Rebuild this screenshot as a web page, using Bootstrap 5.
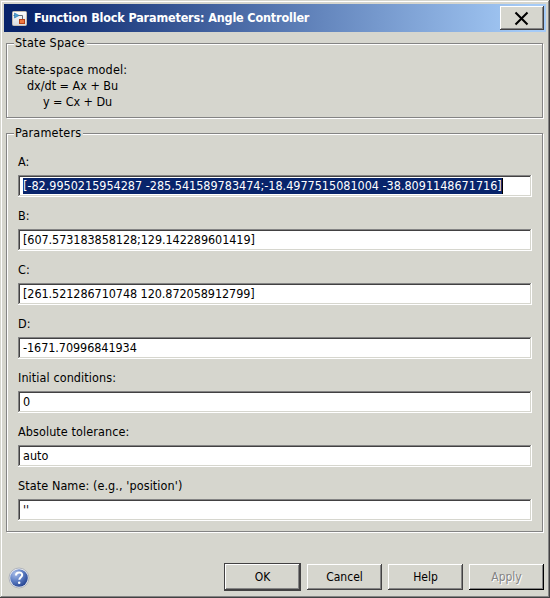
<!DOCTYPE html>
<html lang="en">
<head>
<meta charset="utf-8">
<title>Function Block Parameters: Angle Controller</title>
<link href="https://cdn.jsdelivr.net/npm/bootstrap@5.3.0/dist/css/bootstrap.min.css" rel="stylesheet">
<style>
:root{--face:#d6d6ce;--shade:#848484;--dark:#424142}
body{font:12.5px/16px "DejaVu Sans Condensed","DejaVu Sans",sans-serif;font-stretch:condensed;color:#000;background:var(--face);overflow:hidden}
.dlg{width:550px;height:598px;padding:4px;background:var(--face);box-shadow:inset -1px -1px var(--dark),inset 1px 1px var(--face),inset -2px -2px var(--shade),inset 2px 2px #fff}
.titlebar{height:28px;padding:2px 2px 2px 8px;background:linear-gradient(90deg,#08246b 4%,#a5cbf7 97%);color:#fff}
.caption-text{font-weight:700;margin-left:7px;letter-spacing:-.16px;white-space:nowrap}
.raised{background:var(--face);border:0;border-radius:0;padding:0;color:#000;box-shadow:inset -1px -1px var(--dark),inset 1px 1px #fff,inset -2px -2px var(--shade)}
.closer{width:44px;height:24px}
.frame{position:relative;margin-left:2px;width:537px;border:1px solid var(--shade);box-shadow:inset 1px 1px #fff,1px 1px #fff}
.frame-title{position:absolute;top:-9px;left:7px;padding:0 2px 0 1px;letter-spacing:.2px;background:var(--face)}
.space-frame{margin-top:11px;height:75px;padding:18px 8px 0}
.param-frame{margin-top:15px;height:399px;padding:20px 11px 0}
.model{letter-spacing:.17px}
.eq-state{padding-left:12px;letter-spacing:-.02px}
.eq-out{padding-left:28px;letter-spacing:-.1px}
.lab{height:16px;margin-bottom:5px;letter-spacing:.09px;white-space:nowrap}
.field{width:514px;height:22px;margin-bottom:11px;padding:3px 0 0 5px;background:#fff;white-space:nowrap;box-shadow:inset -1px -1px #fff,inset 1px 1px var(--shade),inset -2px -2px var(--face),inset 2px 2px var(--dark)}
.picked{display:inline-block;height:16px;background:#08246b;color:#fff;border-right:1px solid #000;letter-spacing:-.01px}
.num{letter-spacing:-.07px}
.footer-row{height:28px;margin:31px 2px 0 4px}
.help-icon{margin-top:2px}
.cmd{width:75px;height:26px;margin-left:6px;font-size:12px;line-height:26px;text-align:center}
.cmd-main{width:77px;height:28px;line-height:28px;box-shadow:inset 0 0 0 1px var(--dark),inset -2px -2px var(--dark),inset 2px 2px #fff,inset -3px -3px var(--shade)}
.cmd-off{color:#848484;text-shadow:1px 1px #fff;box-shadow:inset -1px -1px #000,inset 1px 1px #fff,inset -2px -2px var(--shade)}
</style>
<script src="https://cdn.jsdelivr.net/npm/bootstrap@5.3.0/dist/js/bootstrap.bundle.min.js"></script>
</head>
<body>
<main class="dlg">
<header class="titlebar d-flex align-items-center">
<svg width="15" height="15" viewBox="0 0 15 15"><defs><linearGradient id="p" x2="0" y2="1"><stop stop-color="#fff"/><stop offset="1" stop-color="#d7dce2"/></linearGradient></defs><rect x=".5" y=".5" width="14" height="14" rx="1" fill="url(#p)" stroke="#c5bcb0"/><path d="M1.5 4.5h9v4" fill="none" stroke="#666b78"/><path d="M2.5 2v5l4.5-2.5z" fill="#4b9fd2" stroke="#2b73ad" stroke-width=".6"/><rect x="7.5" y="8.5" width="5" height="4" fill="#ef7840" stroke="#b94319"/></svg>
<span class="caption-text">Function Block Parameters: Angle Controller</span>
<button class="raised closer ms-auto d-flex justify-content-center" aria-label="Close"><svg width="44" height="24" viewBox="0 0 44 24"><path d="M15.5 6.5l12 12m0-12l-12 12" stroke="#000" stroke-width="2.1" fill="none"/></svg></button>
</header>
<section class="frame space-frame">
<div class="frame-title">State Space</div>
<div class="model"><div>State-space model:</div><div class="eq-state">dx/dt = Ax + Bu</div><div class="eq-out">y = Cx + Du</div></div>
</section>
<section class="frame param-frame">
<div class="frame-title">Parameters</div>
<div class="lab">A:</div><div class="field"><span class="picked">[-82.9950215954287 -285.541589783474;-18.4977515081004 -38.8091148671716]</span></div>
<div class="lab">B:</div><div class="field num">[607.573183858128;129.142289601419]</div>
<div class="lab">C:</div><div class="field num">[261.521286710748 120.872058912799]</div>
<div class="lab">D:</div><div class="field num">-1671.70996841934</div>
<div class="lab">Initial conditions:</div><div class="field">0</div>
<div class="lab">Absolute tolerance:</div><div class="field">auto</div>
<div class="lab">State Name: (e.g., 'position')</div><div class="field">''</div>
</section>
<footer class="footer-row d-flex align-items-center">
<svg class="help-icon" width="22" height="22" viewBox="0 0 22 22"><defs><radialGradient id="q" cx=".3" cy=".25" r=".85"><stop stop-color="#a9bde8"/><stop offset=".5" stop-color="#5f7fc4"/><stop offset="1" stop-color="#203e8c"/></radialGradient></defs><circle cx="11" cy="11" r="10" fill="#e9ebef" stroke="#a4a9b5" stroke-width=".8"/><circle cx="11" cy="11" r="8.8" fill="url(#q)"/><path d="M8 8.5c0-4 6.2-4 6.2-.5 0 2.2-2.9 2.3-2.9 4.8" fill="none" stroke="#fff" stroke-width="2"/><circle cx="11.2" cy="15.8" r="1.25" fill="#fff"/></svg>
<div class="d-flex align-items-center ms-auto">
<button class="raised cmd cmd-main">OK</button>
<button class="raised cmd">Cancel</button>
<button class="raised cmd">Help</button>
<button class="raised cmd cmd-off" disabled>Apply</button>
</div>
</footer>
</main>
</body>
</html>
